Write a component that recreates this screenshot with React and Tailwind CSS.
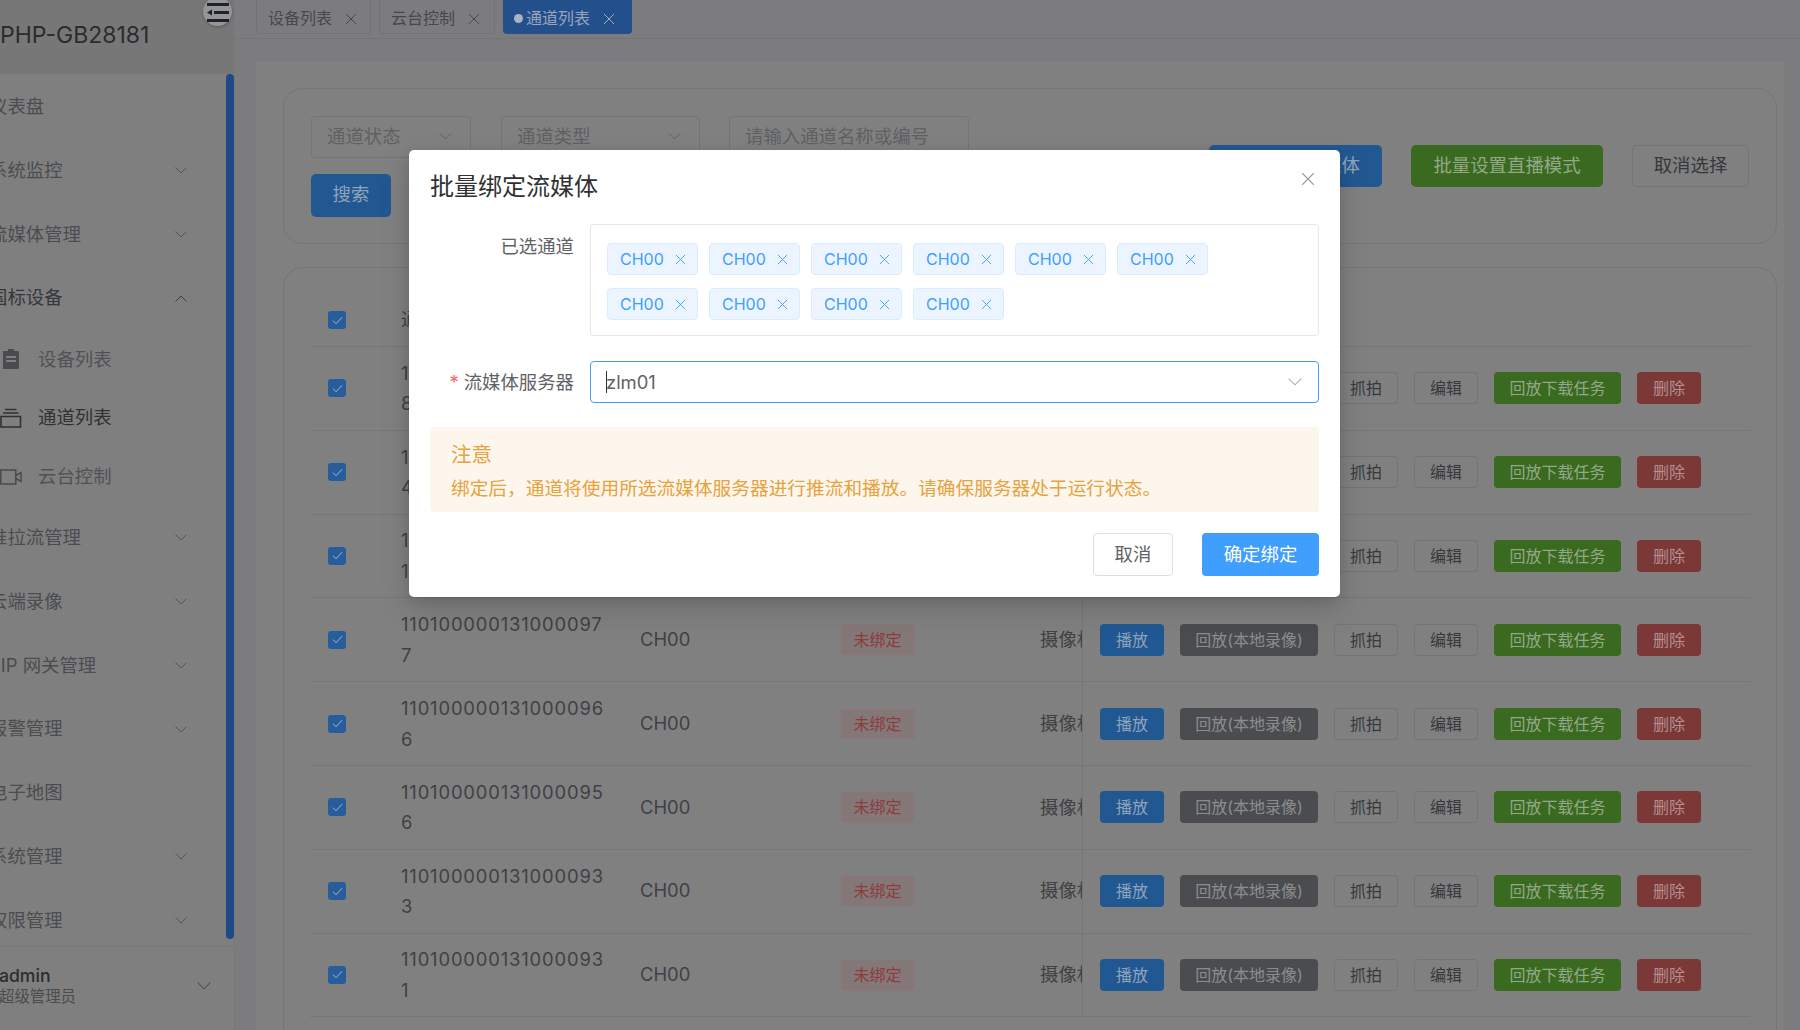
import React from "react";

const FONT = { fontFamily: 'Inter, "Noto Sans CJK SC", sans-serif' };

const MENU_TOP = [
  { label: "仪表盘" },
  { label: "系统监控", arrow: true },
  { label: "流媒体管理", arrow: true },
  { label: "国标设备", open: true },
];
const SUB_MENU = [
  { label: "设备列表", icon: "clip" },
  { label: "通道列表", icon: "stack", active: true },
  { label: "云台控制", icon: "cam" },
];
const MENU_BOTTOM = [
  { label: "推拉流管理", arrow: true },
  { label: "云端录像", arrow: true },
  { label: "SIP 网关管理", arrow: true },
  { label: "报警管理", arrow: true },
  { label: "电子地图" },
  { label: "系统管理", arrow: true },
  { label: "权限管理", arrow: true },
];
const ROWS = [
  "1101000001310000998",
  "1101000001310000984",
  "1101000001310000981",
  "1101000001310000977",
  "1101000001310000966",
  "1101000001310000956",
  "1101000001310000933",
  "1101000001310000931",
];

function Chevron({ className, up }) {
  return (
    <svg viewBox="0 0 12 7" fill="none" stroke="currentColor" strokeWidth="0.9" className={className}>
      <path d={up ? "M.5 6.5 6 1l5.5 5.5" : "M.5.5 6 6l5.5-5.5"} />
    </svg>
  );
}

function Cross({ className }) {
  return (
    <svg viewBox="0 0 12 12" fill="none" stroke="currentColor" strokeWidth="1" className={className}>
      <path d="M1 1l10 10M11 1 1 11" />
    </svg>
  );
}

function SubIcon({ name }) {
  if (name === "clip") {
    return (
      <svg viewBox="0 0 18 20" className="w-[18px] h-[20px] fill-[#4a4b4e] ml-[2px]">
        <path d="M6 0h6v2h4a1 1 0 0 1 1 1v16a1 1 0 0 1-1 1H2a1 1 0 0 1-1-1V3a1 1 0 0 1 1-1h4zM4 7v2h10V7zm0 4v2h10v-2z" />
      </svg>
    );
  }
  if (name === "stack") {
    return (
      <svg viewBox="0 0 22 20" fill="none" stroke="#303135" strokeWidth="1.6" className="w-[22px] h-[20px]">
        <path d="M1 8.5h19.5V19H1zM3 5h15.5M5 1.5h11.5" />
      </svg>
    );
  }
  return (
    <svg viewBox="0 0 22 16" fill="none" stroke="#4a4b4e" strokeWidth="1.5" className="w-[22px] h-[16px]">
      <path d="M.8 1h15v14H.8zM15.8 6.5 21 3.5v9l-5.2-3" />
    </svg>
  );
}

function MenuRow({ item }) {
  return (
    <div className="h-[63.8px] flex items-center justify-between pr-[47px] shrink-0">
      <span className={`-ml-[11px] text-[18.4px] whitespace-nowrap ${item.open ? "text-[#36373a]" : "text-[#4b4c4f]"}`}>
        {item.label}
      </span>
      {item.arrow && <Chevron className="w-[12px] h-[7px] text-[#4f5053]" />}
      {item.open && <Chevron up className="w-[12px] h-[7px] text-[#36373a]" />}
    </div>
  );
}

function Sidebar() {
  return (
    <aside className="relative w-[235px] shrink-0 h-full flex flex-col bg-[#7f7f7f] border-r border-[#797a7b]">
      <div className="h-[74px] shrink-0 bg-[#777778] flex items-center">
        <span className="text-[23px] text-[#2b2c2f] mt-[-4px] whitespace-nowrap">PHP-GB28181</span>
      </div>
      <div className="absolute -top-[3px] left-[203px] w-[29px] h-[29px] rounded-full bg-[#959596] shadow-[0_1px_3px_rgba(0,0,0,0.25)] flex items-center justify-center">
        <svg viewBox="0 0 22 20" className="w-[22px] h-[20px] fill-[#1d2130]">
          <path d="M0 1h22v3H0zM7 9h15v3H7zM0 10.5 5 7.5v6zM0 17h22v3H0z" />
        </svg>
      </div>
      <div className="flex-1 min-h-0 overflow-hidden pt-[1px]">
        {MENU_TOP.map((m) => (
          <MenuRow key={m.label} item={m} />
        ))}
        {SUB_MENU.map((m) => (
          <div key={m.label} className="h-[58.6px] flex items-center">
            <span className="w-[38px] shrink-0 flex items-center">
              <SubIcon name={m.icon} />
            </span>
            <span className={`text-[18.4px] ${m.active ? "text-[#303135]" : "text-[#515255]"}`}>{m.label}</span>
          </div>
        ))}
        {MENU_BOTTOM.map((m) => (
          <MenuRow key={m.label} item={m} />
        ))}
      </div>
      <div className="absolute left-[226px] top-[74px] w-[8px] h-[865px] rounded-full bg-[#1e4a86]" />
      <div className="h-[84px] shrink-0 border-t border-[#767677] flex items-center justify-between pl-0 pr-[23px]">
        <div className="-ml-[1px] -mt-[6px]">
          <div className="text-[17.6px] leading-[21px] font-medium text-[#2b2c2f]">admin</div>
          <div className="text-[15.4px] leading-[21px] text-[#4b4c4f]">超级管理员</div>
        </div>
        <Chevron className="w-[14px] h-[8px] text-[#4f5053] -mt-[5px]" />
      </div>
    </aside>
  );
}

function Tab({ label, active, width }) {
  return (
    <div
      className={`h-[34px] pt-[2px] rounded-b-[4px] flex items-center text-[16px] ${width} ${
        active
          ? "bg-[#234f8b] text-[#97a5bd] pl-[11px]"
          : "border-x border-b border-[#737475] text-[#47484b] pl-[11px]"
      }`}
    >
      {active && <span className="w-[9px] h-[9px] rounded-full bg-[#a9b3c4] mr-[3px]" />}
      <span>{label}</span>
      <Cross className={`w-[12px] h-[12px] ml-[13px] mt-[2px] ${active ? "text-[#a3afc4]" : "text-[#47484b]"}`} />
    </div>
  );
}

function FilterBox({ label, width, arrow }) {
  return (
    <div className={`h-[42px] ${width} border border-[#737475] rounded-[4px] flex items-center justify-between pl-[15px] pr-[18px]`}>
      <span className="text-[18.4px] text-[#5f6063]">{label}</span>
      {arrow && <Chevron className="w-[13px] h-[7px] text-[#5c5d60]" />}
    </div>
  );
}

function ActBtn({ label, className }) {
  return (
    <div className={`h-[32px] rounded-[4px] flex items-center justify-center text-[16px] whitespace-nowrap ${className}`}>
      {label}
    </div>
  );
}

function Check() {
  return (
    <span className="w-[18px] h-[18px] rounded-[3px] bg-[#275d9a] flex items-center justify-center">
      <svg viewBox="0 0 12 10" fill="none" stroke="#a9bbd2" strokeWidth="1.1" className="w-[11px] h-[9px]">
        <path d="M1 5.2 4.4 8.6 11 1.4" />
      </svg>
    </span>
  );
}

function TableRow({ id }) {
  return (
    <div className="h-[83.8px] border-b border-[#757677] grid grid-cols-[91px_239px_200px_200px_42px_1fr] items-center">
      <div className="pl-[18px] flex">
        <Check />
      </div>
      <div className="w-[208px] text-[18.4px] tracking-[0.85px] leading-[30.6px] break-all text-[#404144]">{id}</div>
      <div className="text-[18.4px] text-[#404144]">CH00</div>
      <div>
        <div className="w-[75px] h-[32px] rounded-[4px] border border-[#8a7a7b] bg-[#847778] text-[#8c3c3c] text-[16px] flex items-center justify-center">
          未绑定
        </div>
      </div>
      <div className="overflow-hidden whitespace-nowrap text-[18.4px] text-[#404144]">摄像机</div>
      <div className="h-full border-l border-[#757677] pl-[17px] flex items-center gap-[16px]">
        <ActBtn label="播放" className="w-[64px] bg-[#225892] text-[#8fa3bb]" />
        <ActBtn label="回放(本地录像)" className="w-[138px] bg-[#4b4c50] text-[#8b8c90]" />
        <ActBtn label="抓拍" className="w-[64px] border border-[#737475] text-[#37383b]" />
        <ActBtn label="编辑" className="w-[64px] border border-[#737475] text-[#37383b]" />
        <ActBtn label="回放下载任务" className="w-[127px] bg-[#3a6a1f] text-[#93a888]" />
        <ActBtn label="删除" className="w-[64px] bg-[#7c3737] text-[#b39090]" />
      </div>
    </div>
  );
}

function Main() {
  return (
    <main className="flex-1 min-w-0 h-full flex flex-col bg-[#7c7c7e]">
      <div className="h-[39px] shrink-0 border-b border-[#747577] pl-[21px] flex gap-[8px]">
        <Tab label="设备列表" width="w-[115px]" />
        <Tab label="云台控制" width="w-[116px]" />
        <Tab label="通道列表" active width="w-[129px]" />
      </div>
      <div className="flex-1 min-h-0 ml-[21px] mr-[16px] mt-[22px] bg-[#808080] pl-[27px] pr-[7px] pt-[27px] flex flex-col gap-[23px]">
        <section className="h-[156px] shrink-0 rounded-[20px] border border-[#757677] pl-[27px] pr-[27px] flex items-center justify-between">
          <div className="flex flex-col gap-[16px]">
            <div className="flex gap-[30px]">
              <FilterBox label="通道状态" width="w-[160px]" arrow />
              <FilterBox label="通道类型" width="w-[199px]" arrow />
              <FilterBox label="请输入通道名称或编号" width="w-[240px] -ml-[1px]" />
            </div>
            <div className="w-[80px] h-[43px] rounded-[5px] bg-[#225892] text-[#8fa3bb] text-[18.4px] flex items-center justify-center">
              搜索
            </div>
          </div>
          <div className="flex gap-[29px] -mt-[1px]">
            <div className="w-[173px] h-[42px] rounded-[5px] bg-[#225892] text-[#8fa3bb] text-[18.4px] flex items-center justify-center whitespace-nowrap">
              批量绑定流媒体
            </div>
            <div className="w-[192px] h-[42px] rounded-[5px] bg-[#3a6a1f] text-[#93a888] text-[18.4px] flex items-center justify-center">
              批量设置直播模式
            </div>
            <div className="w-[117px] h-[42px] rounded-[5px] border border-[#737475] text-[#37383b] text-[18.4px] flex items-center justify-center">
              取消选择
            </div>
          </div>
        </section>
        <section className="flex-1 min-h-0 rounded-t-[20px] border border-b-0 border-[#757677] px-[26px] overflow-hidden">
          <div className="h-[79px] pt-[26px] border-b border-[#757677] grid grid-cols-[91px_239px_200px_200px_1fr] items-center text-[18.4px] text-[#404144]">
            <div className="pl-[18px] flex">
              <Check />
            </div>
            <div>通道编号</div>
            <div>通道名称</div>
            <div>绑定状态</div>
            <div>设备类型</div>
          </div>
          {ROWS.map((id) => (
            <TableRow key={id} id={id} />
          ))}
        </section>
      </div>
    </main>
  );
}

function ChannelTag() {
  return (
    <span className="w-[91px] h-[32px] rounded-[4px] bg-[#ecf5ff] border border-[#d9ecff] text-[#409eff] text-[16px] flex items-center pl-[12px]">
      CH00
      <Cross className="w-[11px] h-[11px] ml-[11px]" />
    </span>
  );
}

function Dialog() {
  return (
    <div className="absolute left-[409px] top-[150px] w-[931px] h-[447px] bg-white rounded-[5px] shadow-[0_12px_32px_rgba(0,0,0,0.14),0_4px_12px_rgba(0,0,0,0.1)] px-[21px] pt-[21px]">
      <div className="h-[32px] flex items-center text-[24px] text-[#303133]">批量绑定流媒体</div>
      <Cross className="absolute right-[25px] top-[22px] w-[14px] h-[14px] text-[#909399]" />
      <div className="mt-[21px] flex gap-[16px]">
        <div className="w-[144px] shrink-0 text-right text-[18.4px] leading-[44px] text-[#606266]">已选通道</div>
        <div className="flex-1 h-[112px] border border-[#e4e7ed] rounded-[4px] pl-[16px] pr-[100px] pt-[18px] flex flex-wrap content-start gap-x-[11px] gap-y-[13px]">
          {Array.from({ length: 10 }).map((_, i) => (
            <ChannelTag key={i} />
          ))}
        </div>
      </div>
      <div className="mt-[25px] flex gap-[16px]">
        <div className="w-[144px] shrink-0 text-right text-[18.4px] leading-[42px] text-[#606266] whitespace-nowrap">
          <span className="text-[#f56c6c] mr-[5px]">*</span>流媒体服务器
        </div>
        <div className="flex-1 h-[42px] border border-[#409eff] rounded-[4px] pl-[15px] pr-[16px] flex items-center justify-between">
          <span className="relative text-[18.4px] text-[#606266] mt-[1px]">
            <span className="absolute left-0 top-[2px] w-px h-[22px] bg-[#303133]" />
            zlm01
          </span>
          <Chevron className="w-[14px] h-[8px] text-[#a8abb2]" />
        </div>
      </div>
      <div className="mt-[24px] h-[85px] rounded-[4px] bg-[#fdf6ec] pl-[21px] pt-[13px] text-[#e6a23c]">
        <div className="text-[20.6px] leading-[30px]">注意</div>
        <div className="text-[18.7px] leading-[30px] mt-[4px]">
          绑定后，通道将使用所选流媒体服务器进行推流和播放。请确保服务器处于运行状态。
        </div>
      </div>
      <div className="mt-[21px] flex justify-end gap-[29px]">
        <div className="w-[80px] h-[43px] rounded-[4px] border border-[#dcdfe6] text-[18.4px] text-[#606266] flex items-center justify-center">
          取消
        </div>
        <div className="w-[117px] h-[43px] rounded-[4px] bg-[#409eff] text-[18.4px] text-white flex items-center justify-center">
          确定绑定
        </div>
      </div>
    </div>
  );
}

export default function App() {
  return (
    <div style={FONT} className="relative w-[1800px] h-[1030px] overflow-hidden flex">
      <Sidebar />
      <Main />
      <Dialog />
    </div>
  );
}
